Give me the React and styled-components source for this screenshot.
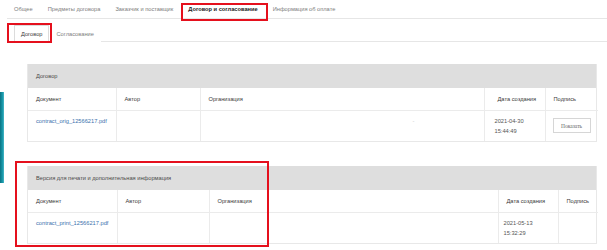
import React from "react";
import styled, { createGlobalStyle } from "styled-components";

const Global = createGlobalStyle`
  html, body { margin: 0; padding: 0; background: #fff; }
  body { font-family: "Liberation Sans", Arial, sans-serif; }
`;

const Root = styled.div`
  position: relative;
  width: 607px;
  height: 250px;
  overflow: hidden;
  background: #fff;
  font-size: 5.7px;
  color: #333;
`;

const TabBar = styled.div`
  display: flex;
  margin-left: 6.5px;
  height: 18px;
  border-bottom: 1px solid #e6e6e6;
`;

const Tab = styled.div`
  padding: 0 7.5px;
  display: flex;
  align-items: center;
  color: ${(p) => (p.$active ? "#222" : "#7d7d7d")};
  font-weight: ${(p) => (p.$active ? "bold" : "normal")};
  white-space: nowrap;
`;

const SubTabBar = styled.div`
  display: flex;
  margin: 6px 0 0 8px;
  height: 16px;
  border-bottom: 1px solid #e6e6e6;
  padding-left: 6px;
`;

const SubTab = styled.div`
  padding: 0 6px;
  display: flex;
  align-items: center;
  white-space: nowrap;
  color: ${(p) => (p.$active ? "#3a3a3a" : "#7d7d7d")};
  border: 1px solid ${(p) => (p.$active ? "#dcdcdc" : "transparent")};
  border-bottom: none;
  margin-bottom: -1px;
  background: #fff;
`;

const Content = styled.div`
  padding: 22px 10px 0 27px;
  display: flex;
  flex-direction: column;
  gap: 24px;
`;

const Panel = styled.div`
  border: 1px solid #e8e8e8;
  border-top: none;
`;

const PanelHeading = styled.div`
  height: 24px;
  background: #dedede;
  display: flex;
  align-items: center;
  padding-left: 8px;
  color: #4a4a4a;
`;

const Table = styled.table`
  width: 100%;
  border-collapse: collapse;
  table-layout: fixed;
`;

const Th = styled.th`
  height: 22px;
  padding: 0 0 0 ${(p) => p.$pl || 8}px;
  text-align: left;
  font-weight: normal;
  color: #3a3a3a;
  border-left: 1px solid #ebebeb;
  border-bottom: 1px solid #ebebeb;
  vertical-align: middle;
  &:first-child { border-left: none; }
`;

const Td = styled.td`
  height: 24px;
  padding: 6px 0 0 ${(p) => p.$pl || 8}px;
  vertical-align: top;
  line-height: 9.5px;
  border-left: 1px solid #ebebeb;
  color: #555;
  &:first-child { border-left: none; }
`;

const Link = styled.a`
  color: #3b72ad;
  text-decoration: none;
`;

const Dash = styled.span`
  display: inline-block;
  color: #c8c8c8;
  margin-left: ${(p) => p.$offset}px;
`;

const ShowButton = styled.button`
  display: block;
  width: 38px;
  height: 15px;
  margin-top: 1px;
  padding: 0;
  border: 1px solid #d6d6d6;
  background: #fff;
  font-family: "Liberation Serif", "Times New Roman", serif;
  font-size: 5.5px;
  color: #666;
`;

const SideHandle = styled.div`
  position: absolute;
  left: 0;
  top: 92px;
  width: 4px;
  height: 91px;
  background: linear-gradient(to right, #0a7383, #1796a8 60%, #4bb7c6);
`;

const RedBox = styled.div`
  position: absolute;
  border: 2px solid #e5101d;
  box-sizing: border-box;
  pointer-events: none;
`;

function DocTable({ title, cols, file, date, time, showButton, dashOffset, datePl }) {
  return (
    <Panel>
      <PanelHeading>{title}</PanelHeading>
      <Table>
        <colgroup>
          {cols.map((w, i) => (
            <col key={i} style={{ width: w }} />
          ))}
        </colgroup>
        <thead>
          <tr>
            <Th>Документ</Th>
            <Th>Автор</Th>
            <Th>Организация</Th>
            <Th $pl={datePl}>Дата создания</Th>
            <Th>Подпись</Th>
          </tr>
        </thead>
        <tbody>
          <tr>
            <Td>
              <Link href="#">{file}</Link>
            </Td>
            <Td></Td>
            <Td>{dashOffset ? <Dash $offset={dashOffset}>-</Dash> : null}</Td>
            <Td $pl={datePl ? datePl - 3 : 7}>
              {date}
              <br />
              {time}
            </Td>
            <Td $pl={7}>{showButton ? <ShowButton>Показать</ShowButton> : null}</Td>
          </tr>
        </tbody>
      </Table>
    </Panel>
  );
}

export default function App() {
  return (
    <Root>
      <Global />
      <TabBar>
        <Tab>Общее</Tab>
        <Tab>Предметы договора</Tab>
        <Tab>Заказчик и поставщик</Tab>
        <Tab $active>Договор и согласование</Tab>
        <Tab>Информация об оплате</Tab>
      </TabBar>
      <SubTabBar>
        <SubTab $active>Договор</SubTab>
        <SubTab>Согласование</SubTab>
      </SubTabBar>
      <Content>
        <DocTable
          title="Договор"
          cols={[88, 84, 284, 61, 53]}
          file="contract_orig_12566217.pdf"
          date="2021-04-30"
          time="15:44:49"
          showButton
          dashOffset={204}
          datePl={13}
        />
        <DocTable
          title="Версия для печати и дополнительная информация"
          cols={[89, 92, 289, 60, 40]}
          file="contract_print_12566217.pdf"
          date="2021-05-13"
          time="15:32:29"
          datePl={8}
        />
      </Content>
      <SideHandle />
      <RedBox style={{ left: 181, top: 3, width: 87, height: 18 }} />
      <RedBox style={{ left: 7, top: 23, width: 45, height: 20 }} />
      <RedBox style={{ left: 15, top: 161, width: 254, height: 86 }} />
    </Root>
  );
}
